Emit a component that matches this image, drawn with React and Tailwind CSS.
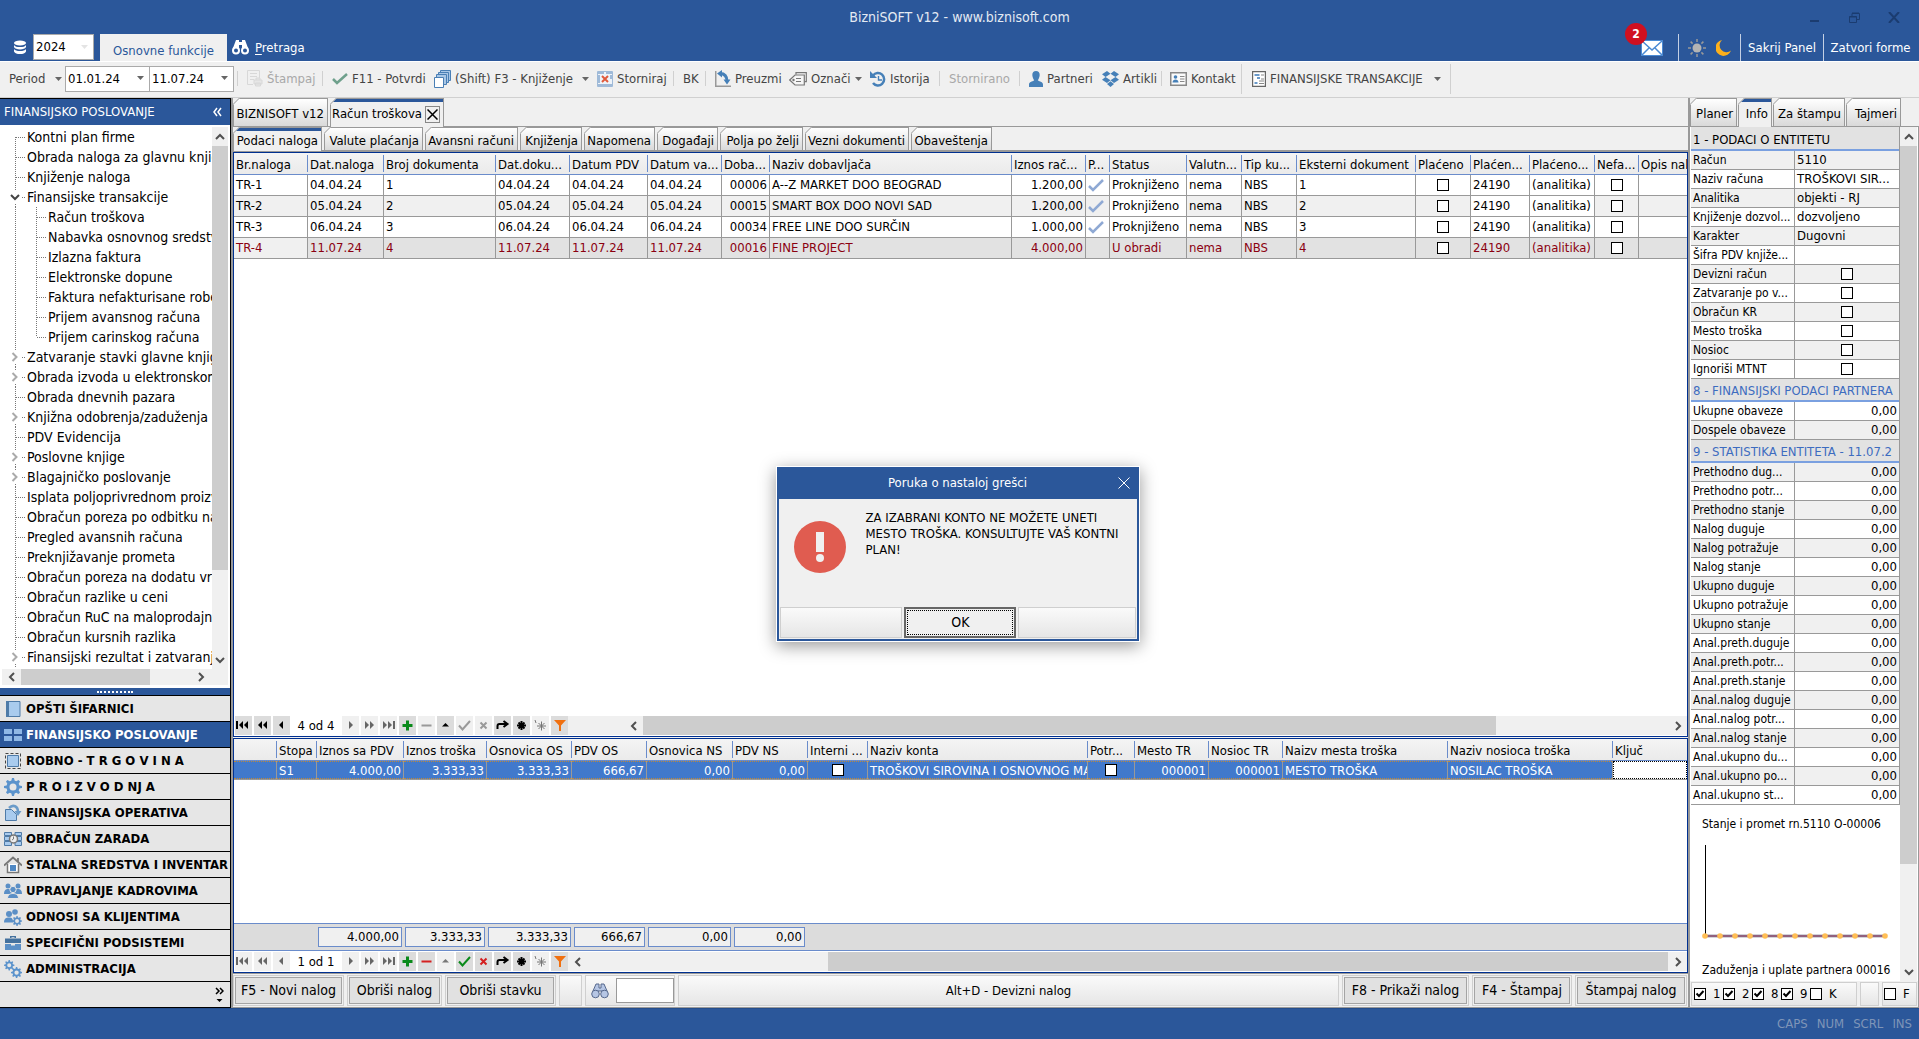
import React from "react";

/* ---------- shared bits ---------- */

function Caret({ className = "fill-[#666]" }) {
  return (
    <svg width="7" height="4" viewBox="0 0 7 4" className={className} aria-hidden="true">
      <path d="M0 0h7L3.5 4z" />
    </svg>
  );
}

function Chevron({ dir }) {
  const d = {
    up: "M1 7l4-4 4 4",
    down: "M1 3l4 4 4-4",
    left: "M7 1L3 5l4 4",
    right: "M3 1l4 4-4 4",
  }[dir];
  return (
    <svg width="10" height="10" viewBox="0 0 10 10" fill="none" stroke="#505050" strokeWidth="2" aria-hidden="true">
      <path d={d} />
    </svg>
  );
}

function Check({ label, checked = false }) {
  return (
    <span className="inline-grid">
      <input
        type="checkbox"
        defaultChecked={checked}
        aria-label={label}
        className="peer col-start-1 row-start-1 size-3 appearance-none border border-black bg-white"
      />
      <svg
        viewBox="0 0 12 12"
        className="pointer-events-none col-start-1 row-start-1 hidden size-3 peer-checked:block"
        fill="none"
        stroke="#000"
        strokeWidth="2"
        aria-hidden="true"
      >
        <path d="M2.5 5.5L5 8l4.5-5" />
      </svg>
    </span>
  );
}

function Tab({ children, active = false, width, extra }) {
  return (
    <div
      className={
        "relative flex shrink-0 items-center justify-end border border-b-0 border-[#999] pr-[3px] whitespace-nowrap " +
        (active ? "-mb-px bg-[#f0f0f0] pb-px " : "bg-linear-to-b from-white to-[#d9d9d9] ") +
        width
      }
    >
      {active && <span className="absolute inset-x-0 top-0 h-[3px] bg-[#2b579a]" />}
      <svg className="absolute -top-px -left-px" width="7" height="7" viewBox="0 0 7 7" aria-hidden="true">
        <path d="M0 0h7L0 7z" fill="#f0f0f0" />
        <path d="M6.5 0L0 6.5" stroke="#999" />
      </svg>
      <button type="button" className="pt-[3px]">{children}</button>
      {extra}
    </div>
  );
}

/* ---------- title bar ---------- */

function TitleBar() {
  return (
    <header className="grid h-[61px] shrink-0 grid-rows-[34px_27px] bg-[#2b579a] text-white">
      <div className="grid grid-cols-[1fr_auto_1fr] items-center">
        <span />
        <h1 className="text-[14px] text-[#e4eaf3]">BizniSOFT v12 - www.biznisoft.com</h1>
        <div className="flex items-center justify-end gap-[28px] pr-[19px]">
          <button type="button" aria-label="Umanji" className="w-3 pt-1">
            <svg width="11" height="10" viewBox="0 0 11 10"><path d="M1 7h9" stroke="#1b3c70" strokeWidth="2" /></svg>
          </button>
          <button type="button" aria-label="Vrati">
            <svg width="11" height="11" viewBox="0 0 11 11" fill="none" stroke="#1b3c70"><path d="M.5 4.500h7v6h-7zM3 4V1.500h7.500v6H8M.5 5h7M3 1h7" /></svg>
          </button>
          <button type="button" aria-label="Zatvori">
            <svg width="12" height="11" viewBox="0 0 12 11" stroke="#1b3c70" strokeWidth="2"><path d="M1 0l10 11M11 0L1 11" /></svg>
          </button>
        </div>
      </div>
      <div className="flex items-stretch">
        <svg className="mt-[6px] ml-[13px] shrink-0" width="14" height="15" viewBox="0 0 14 15" fill="#fff" aria-hidden="true">
          <ellipse cx="7" cy="3" rx="6" ry="2.500" />
          <path d="M1 5c1 1.800 3 2 6 2s5-.2 6-2v2c-1 1.800-3 2.400-6 2.400S2 8.800 1 7zM1 9c1 1.500 3 2 6 2s5-.5 6-2v2.500c-1 2-3 2.500-6 2.500s-5-.5-6-2.500z" />
        </svg>
        <div className="relative ml-[6px] w-[61px]">
          <select
            aria-label="Godina"
            className="h-[26px] w-full appearance-none border border-[#aaa] bg-white pl-[2px] text-[13px] text-black"
            defaultValue="2024"
          >
            <option>2024</option>
          </select>
          <span className="pointer-events-none absolute top-[11px] right-[6px]"><Caret className="fill-[#e4e4e4]" /></span>
        </div>
        <button type="button" className="ml-[6px] w-[127px] bg-[#f0f0f0] pt-[6px] text-[13px] text-[#2b579a]">
          Osnovne funkcije
        </button>
        <button type="button" className="ml-[5px] flex items-center gap-[6px] text-[13px]">
          <svg width="17" height="15" viewBox="0 0 17 15" fill="#fff" aria-hidden="true">
            <path d="M4 0h3v2h3V0h3l3 8H10V5H7v3H1z" />
            <circle cx="4" cy="10.500" r="3" fill="#2b579a" stroke="#fff" strokeWidth="2" />
            <circle cx="13" cy="10.500" r="3" fill="#2b579a" stroke="#fff" strokeWidth="2" />
          </svg>
          <span><u className="underline-offset-2">P</u>retraga</span>
        </button>
        <div className="ml-auto flex items-stretch text-[13px]">
          <button type="button" aria-label="Poruke" className="relative mr-[15px]">
            <svg width="22" height="16" viewBox="0 0 22 16" aria-hidden="true">
              <path d="M.5.500h21v15H.5z" fill="#fff" stroke="#4a8ad4" />
              <path d="M1 1l10 9 10-9M1 15l7-7M21 15l-7-7" fill="none" stroke="#4a8ad4" strokeWidth="1.500" />
            </svg>
            <span className="absolute -top-[11px] -left-[16px] flex size-[22px] items-center justify-center rounded-full bg-[#d01020] text-[12px] font-bold">2</span>
          </button>
          <div className="flex items-center gap-[10px] border-x border-[#c4d0e4] px-[9px]">
            <svg width="18" height="18" viewBox="0 0 18 18" aria-label="Svetla tema">
              <circle cx="9" cy="9" r="4.500" fill="#b4b4b4" />
              <path d="M9 0v3M9 15v3M0 9h3M15 9h3M2.600 2.600l2 2M13.400 13.400l2 2M15.400 2.600l-2 2M4.600 13.400l-2 2" stroke="#999" strokeWidth="1.500" />
            </svg>
            <svg width="15" height="16" viewBox="0 0 15 16" aria-label="Tamna tema">
              <path d="M6 0A8 8 0 1 0 15 10.500 6.500 6.500 0 0 1 6 0z" fill="#fdb01c" />
            </svg>
          </div>
          <button type="button" className="w-[83px] border-r border-[#c4d0e4]">Sakrij Panel</button>
          <button type="button" className="w-[95px] pr-[2px]">Zatvori forme</button>
        </div>
      </div>
    </header>
  );
}

/* ---------- toolbar ---------- */

function Sep({ tall = false }) {
  return <span className={"shrink-0 border-l border-[#d0d0d0] " + (tall ? "h-[30px]" : "h-[15px]")} />;
}

function DateBox({ label, value }) {
  return (
    <div className="relative -ml-px w-[85px] shrink-0">
      <input
        aria-label={label}
        defaultValue={value}
        className="h-[26px] w-full border border-[#aaa] bg-white pl-[2px] text-[13px] text-black"
      />
      <span className="pointer-events-none absolute top-[10px] right-[6px]"><Caret /></span>
    </div>
  );
}

function Tool({ icon, children, width, muted = false }) {
  return (
    <button
      type="button"
      className={"flex h-[24px] shrink-0 items-center gap-1 whitespace-nowrap " + (muted ? "text-[#a8a8a8] " : "text-[#444] ") + width}
    >
      {icon}
      <span>{children}</span>
    </button>
  );
}

const toolIcons = {
  print: (
    <svg width="17" height="17" viewBox="0 0 17 17" fill="none" stroke="#d8d8d8" aria-hidden="true">
      <path d="M13.500 8V.5H1.500v14H7M4 3.500h7M4 6.500h7M4 9.500h4" /><path d="M8 10h8v4H8zM10 10V8h4v2M9.500 13h5v3h-5z" fill="#e6e6e6" />
    </svg>
  ),
  ok: (
    <svg width="16" height="12" viewBox="0 0 16 12" fill="none" stroke="#6fa08c" strokeWidth="2.500" aria-hidden="true"><path d="M1 6l4 4L15 1" /></svg>
  ),
  stack: (
    <svg width="17" height="18" viewBox="0 0 17 18" fill="#a9c7e6" stroke="#4a7fb5" aria-hidden="true">
      <path d="M6.500.500h10v10h-10z" /><path d="M4.500 2.500h10v10h-10z" /><path d="M2.500 4.500h10v10h-10z" /><path d="M.5 7.500h9v10h-9z" fill="#fff" />
    </svg>
  ),
  storno: (
    <svg width="16" height="16" viewBox="0 0 16 16" aria-hidden="true">
      <path d="M.5.500h15v15H.5z" fill="#eef3f9" stroke="#9fbad8" />
      <path d="M1 1h6v2H1zM9 1h6v2H9zM1 4h2v8H1zM13 4h2v4h-2zM1 13h14v2H1z" fill="#9fbad8" />
      <path d="M5 5l6 6M11 5l-6 6" stroke="#e05a3c" strokeWidth="2" />
    </svg>
  ),
  take: (
    <svg width="16" height="17" viewBox="0 0 16 17" aria-hidden="true">
      <path d="M.75 1v15.250H16" fill="none" stroke="#999" strokeWidth="1.500" />
      <path d="M5 3.500c5 0 7 2.500 7 8" fill="none" stroke="#4680b8" strokeWidth="3" />
      <path d="M7 0v7.500L2 3.500zM8.500 9.500h7L12 14.500z" fill="#4680b8" />
    </svg>
  ),
  tag: (
    <svg width="18" height="14" viewBox="0 0 18 14" fill="#f6f6f6" stroke="#777" strokeWidth="1.200" aria-hidden="true">
      <path d="M7 2.500V.7h10.300v9H15.500" /><path d="M.7 8L6 3h9.300v10H6z" /><path d="M7 6.500h5M7 9.500h5" /><circle cx="4.500" cy="8" r=".6" />
    </svg>
  ),
  history: (
    <svg width="16" height="16" viewBox="0 0 16 16" fill="none" stroke="#4680b8" aria-hidden="true">
      <path d="M3 4.500A6.200 6.200 0 1 1 3 12" strokeWidth="2.500" /><path d="M0 0v7h7z" fill="#4680b8" stroke="none" /><path d="M8.500 5v4h3.500" strokeWidth="1.400" />
    </svg>
  ),
  person: (
    <svg width="14" height="16" viewBox="0 0 14 16" fill="#4680b8" aria-hidden="true">
      <path d="M7 0c2.400 0 3.700 1.600 3.700 4S9 8.800 8.800 9.600c2 1 5.200 1.400 5.200 3.900V16H0v-2.500C0 11 3.200 10.600 5.200 9.600 5 8.800 3.300 6.400 3.300 4S4.600 0 7 0z" />
    </svg>
  ),
  box: (
    <svg width="17" height="16" viewBox="0 0 17 16" fill="#4680b8" aria-hidden="true">
      <path d="M5 0l3.500 2.800L3.500 6 0 3.200zM12 0l5 3.200L13.500 6l-5-3.200zM0 8.800L3.500 6l5 3.200L5 12zM17 8.800L13.500 6l-5 3.200L12 12zM5 13l3.500-2.800L12 13l-3.500 3z" />
    </svg>
  ),
  card: (
    <svg width="17" height="14" viewBox="0 0 17 14" aria-hidden="true">
      <path d="M.75.750h15.500v12.500H.75z" fill="#fafafa" stroke="#888" strokeWidth="1.500" />
      <circle cx="5.500" cy="5" r="1.800" fill="#4680b8" /><path d="M2.500 10.500c0-4 6-4 6 0z" fill="#4680b8" />
      <path d="M10 4.500h4.500M10 7h4.500M10 9.500h4.500" stroke="#888" />
    </svg>
  ),
  doc: (
    <svg width="14" height="16" viewBox="0 0 14 16" aria-hidden="true">
      <path d="M.6.600h12.800v14.800H.6z" fill="#fff" stroke="#666" strokeWidth="1.200" />
      <path d="M2.500 4h5M5 7h3M2.500 12h3" stroke="#3a78b8" strokeWidth="1.300" /><path d="M9 4h3M9 8h3M7 10h5M7 12.500h5" stroke="#888" />
    </svg>
  ),
};

function Toolbar() {
  return (
    <div className="flex h-[37px] shrink-0 items-center overflow-hidden border-t border-b border-t-white border-b-[#d0d0d0] pb-[2px] pl-[9px] text-[13px]">
      <Tool width="w-[46px]">Period</Tool>
      <Caret />
      <span className="w-[4px]" />
      <DateBox label="Od datuma" value="01.01.24" />
      <DateBox label="Do datuma" value="11.07.24" />
      <span className="w-[3px]" />
      <Sep />
      <span className="w-[8px]" />
      <Tool icon={toolIcons.print} width="w-[76px]" muted>Štampaj</Tool>
      <Sep />
      <span className="w-[9px]" />
      <Tool icon={toolIcons.ok} width="w-[102px]">F11 - Potvrdi</Tool>
      <Tool icon={toolIcons.stack} width="w-[148px]">(Shift) F3 - Knjiženje</Tool>
      <Caret />
      <span className="w-[8px]" />
      <Tool icon={toolIcons.storno} width="w-[76px]">Storniraj</Tool>
      <Sep />
      <span className="w-[9px]" />
      <Tool width="w-[22px]">BK</Tool>
      <Sep />
      <span className="w-[9px]" />
      <Tool icon={toolIcons.take} width="w-[74px]">Preuzmi</Tool>
      <Tool icon={toolIcons.tag} width="w-[66px]">Označi</Tool>
      <Caret />
      <span className="w-[8px]" />
      <Tool icon={toolIcons.history} width="w-[69px]">Istorija</Tool>
      <Sep />
      <span className="w-[9px]" />
      <Tool width="w-[70px]" muted>Stornirano</Tool>
      <Sep />
      <span className="w-[9px]" />
      <Tool icon={toolIcons.person} width="w-[73px]">Partneri</Tool>
      <Tool icon={toolIcons.box} width="w-[59px]">Artikli</Tool>
      <Sep />
      <span className="w-[8px]" />
      <Tool icon={toolIcons.card} width="w-[71px]">Kontakt</Tool>
      <Sep tall />
      <span className="w-[10px]" />
      <Tool icon={toolIcons.doc} width="w-[182px]">FINANSIJSKE TRANSAKCIJE</Tool>
      <Caret />
      <span className="w-[9px]" />
      <Sep tall />
    </div>
  );
}

/* ---------- left panel ---------- */

const tree = [
  ["Kontni plan firme", 1],
  ["Obrada naloga za glavnu knjigu", 1],
  ["Knjiženje naloga", 1],
  ["Finansijske transakcije", 1, "open"],
  ["Račun troškova", 2],
  ["Nabavka osnovnog sredstva", 2],
  ["Izlazna faktura", 2],
  ["Elektronske dopune", 2],
  ["Faktura nefakturisane robe", 2],
  ["Prijem avansnog računa", 2],
  ["Prijem carinskog računa", 2, "last"],
  ["Zatvaranje stavki glavne knjige", 1, "closed"],
  ["Obrada izvoda u elektronskom", 1, "closed"],
  ["Obrada dnevnih pazara", 1],
  ["Knjižna odobrenja/zaduženja", 1, "closed"],
  ["PDV Evidencija", 1],
  ["Poslovne knjige", 1, "closed"],
  ["Blagajničko poslovanje", 1, "closed"],
  ["Isplata poljoprivrednom proizvođaču", 1],
  ["Obračun poreza po odbitku na", 1],
  ["Pregled avansnih računa", 1],
  ["Preknjižavanje prometa", 1],
  ["Obračun poreza na dodatu vrednost", 1],
  ["Obračun razlike u ceni", 1],
  ["Obračun RuC na maloprodajne", 1],
  ["Obračun kursnih razlika", 1],
  ["Finansijski rezultat i zatvaranje", 1, "closed"],
];

function TreeLines({ level, kind, first }) {
  const expander = kind === "open" || kind === "closed";
  return (
    <svg width={level === 2 ? 48 : 27} height="20" className="shrink-0" fill="none" aria-hidden="true">
      <g stroke="#777" strokeDasharray="1 1">
        {expander ? (
          <path d="M15.500 0v3M15.500 17v3M22 10.500h4" />
        ) : level === 1 ? (
          <path d={first ? "M15.500 10v10M16 10.500h10" : "M15.500 0v20M16 10.500h10"} />
        ) : (
          <path d={kind === "last" ? "M15.500 0v20M36.500 0v10M37 10.500h10" : "M15.500 0v20M36.500 0v20M37 10.500h10"} />
        )}
      </g>
      {kind === "open" && <path d="M11 8l4 4 4-4" stroke="#444" strokeWidth="2" />}
      {kind === "closed" && <path d="M12.500 6l4 4-4 4" stroke="#aaa" strokeWidth="2" />}
    </svg>
  );
}

const blue = { fill: "#a9cbee", stroke: "#4f7ba8" };
const gear = "M8 0h2l.6 2.600 1.600.7L14.500 2 16 3.500l-1.300 2.300.7 1.600L18 8v2l-2.600.6-.7 1.600L16 14.500 14.500 16l-2.300-1.300-1.600.7L10 18H8l-.6-2.600-1.600-.7L3.500 16 2 14.500l1.300-2.300-.7-1.600L0 10V8l2.600-.6.7-1.600L2 3.500 3.500 2l2.300 1.300 1.600-.7zM9 5.500a3.500 3.500 0 1 0 0 7 3.500 3.500 0 0 0 0-7z";

const modules = [
  ["OPŠTI ŠIFARNICI", <g key="i"><path d="M3 1.500h13v15H3z" {...blue} /><path d="M2 1h3v16H2z" fill="#4f7ba8" /></g>],
  ["FINANSIJSKO POSLOVANJE", <g key="i" fill="#8fb8e6"><path d="M0 3h8v5H0zM10 3h8v5h-8zM0 10h8v5H0zM10 10h8v5h-8z" /></g>],
  ["ROBNO - T R G O V I N A", <g key="i"><path d="M3.500 3.500h11v11h-11z" {...blue} /><path d="M1.500 1.500h15v15h-15z" fill="none" stroke="#444" strokeDasharray="3 2" /></g>],
  ["P R O I Z V O D NJ A", <path key="i" d={gear} fill="#5b93cc" fillRule="evenodd" />],
  ["FINANSIJSKA OPERATIVA", <g key="i"><path d="M1.500 5.500h6l5 5v6h-11z" {...blue} /><path d="M5 4c4-4 9-2 9 4" fill="none" stroke="#6b9bc9" strokeWidth="2.500" /><path d="M10.500 7h7L14 12z" fill="#6b9bc9" /></g>],
  ["OBRAČUN ZARADA", <g key="i"><path d="M.5 2.500h7v3h-7zM.5 6.500h6v4h-6zM.5 11.500h7v4h-7zM11 2.500h6.500v3H11zM12 6.500h5.500v4H12zM11 11.500h6.500v4H11z" {...blue} /><circle cx="9.500" cy="9" r="4" fill="#eee" stroke="#777" strokeWidth="1.500" /><path d="M9.500 6.500V9l-1.500 1" stroke="#777" fill="none" /></g>],
  ["STALNA SREDSTVA I INVENTAR", <g key="i"><path d="M3.500 8v8.500h11V8" fill="#fff" stroke="#777" strokeWidth="1.500" /><path d="M0 9.500L9 1.500l9 8M14 2v4" fill="none" stroke="#777" strokeWidth="1.800" /><path d="M6 9h6v6H6z" fill="#4f88c4" /></g>],
  ["UPRAVLJANJE KADROVIMA", <g key="i" fill="#5b8fc6"><circle cx="4" cy="4" r="2.500" /><circle cx="14" cy="4" r="2.500" /><path d="M0 12c0-4 2-5 4-5h10c2 0 4 1 4 5z" /><circle cx="9" cy="7.500" r="3.200" stroke="#e6e6e6" /><path d="M3.500 16.500c0-4 3-5 5.500-5s5.500 1 5.500 5z" stroke="#e6e6e6" /></g>],
  ["ODNOSI SA KLIJENTIMA", <g key="i" fill="#5b8fc6"><circle cx="11" cy="4" r="2.800" /><circle cx="5" cy="6" r="3" /><path d="M0 14.500c0-4 2-5 5-5s4 1 4 5z" /><path d={gear} fillRule="evenodd" transform="translate(8 8) scale(.56)" /></g>],
  ["SPECIFIČNI PODSISTEMI", <g key="i" fill="#44719e"><path d="M6 4V2h6v2h-1.500v-.8h-3V4zM1 4.500h16v4.500H1z" /><path d="M1 10h6v1.500h4V10h6v6H1z" fill="#5b8fc6" /></g>],
  ["ADMINISTRACIJA", <g key="i" fill="#5b93cc"><path d={gear} fillRule="evenodd" transform="scale(.58)" /><path d={gear} fillRule="evenodd" transform="translate(7 7) scale(.62)" /></g>],
];

function Sidebar() {
  return (
    <aside className="flex w-[231px] shrink-0 flex-col border-t border-r border-black bg-white">
      <div className="flex h-[26px] shrink-0 items-center justify-between bg-[#2b579a] pr-2 pl-[4px] text-[13px] text-white">
        <h2>FINANSIJSKO POSLOVANJE</h2>
        <button type="button" aria-label="Skupi panel">
          <svg width="9" height="10" viewBox="0 0 9 10" fill="none" stroke="#fff" strokeWidth="1.500"><path d="M4 1L1 5l3 4M8 1L5 5l3 4" /></svg>
        </button>
      </div>
      <div className="flex min-h-0 flex-1 overflow-hidden pt-[2px] pr-[2px]">
        <ul className="min-w-0 flex-1 overflow-hidden text-[14px] leading-5">
          {tree.map(([name, level, kind], i) => (
            <li key={name} className="flex h-5 whitespace-nowrap">
              <TreeLines level={level} kind={kind} first={i === 0} />
              <a href="#" className="text-black">{name}</a>
            </li>
          ))}
        </ul>
        <div className="flex w-4 shrink-0 flex-col items-center bg-[#f0f0f0]">
          <span className="flex h-[19px] items-center"><Chevron dir="up" /></span>
          <span className="h-[424px] w-full bg-[#cdcdcd]" />
          <span className="mt-auto flex h-[19px] items-center"><Chevron dir="down" /></span>
        </div>
      </div>
      <div className="mr-[2px] mb-[3px] ml-[2px] flex h-4 shrink-0 items-center bg-[#f0f0f0] pr-[22px]">
        <span className="flex w-[19px] justify-center"><Chevron dir="left" /></span>
        <span className="h-full w-[129px] bg-[#cdcdcd]" />
        <span className="ml-auto"><Chevron dir="right" /></span>
      </div>
      <div className="flex h-[7px] shrink-0 items-center justify-center bg-[#2b579a]">
        <span className="w-[36px] border-t-2 border-dotted border-white" />
      </div>
      <nav className="shrink-0 border-b border-black bg-[#e6e6e6]">
        {modules.map(([name, icon], i) => (
          <button
            type="button"
            key={name}
            className={
              "flex h-[26px] w-full items-center gap-[4px] border-t border-black pl-[4px] text-left text-[13px] font-bold whitespace-nowrap " +
              (i === 1 ? "bg-[#2b579a] text-white" : "text-black")
            }
          >
            <svg width="18" height="18" viewBox="0 0 18 18" className="shrink-0" aria-hidden="true">{icon}</svg>
            {name}
          </button>
        ))}
        <div className="flex h-[26px] items-center justify-end border-t border-black pr-[6px]">
          <button type="button" aria-label="Još modula">
            <svg width="9" height="16" viewBox="0 0 9 16" fill="none" stroke="#000" strokeWidth="1.500">
              <path d="M1 1l3 3-3 3M5 1l3 3-3 3" /><path d="M1.500 12h6L4.500 15z" fill="#000" stroke="none" />
            </svg>
          </button>
        </div>
      </nav>
    </aside>
  );
}

/* ---------- record navigator ---------- */

const navGlyphs = [
  ["Prvi", "M1 5h2v8H1zM8 5v8L4 9zM13 5v8L9 9z"],
  ["Prethodna strana", "M8 5v8L4 9zM13 5v8L9 9z"],
  ["Prethodni", "M10 5v8L6 9z"],
  ["Sledeći", "M7 5v8l4-4z"],
  ["Sledeća strana", "M4 5v8l4-4zM9 5v8l4-4z"],
  ["Poslednji", "M3 5v8l4-4zM8 5v8l4-4zM13 5h2v8h-2z"],
];
const navTools = [
  ["Dodaj", "M3.500 9.500h10M8.500 4.500v10", 3],
  ["Obriši", "M3.500 9.500h10", 2],
  ["Izmeni", "M5 10.500h7L8.500 7z", 0],
  ["Potvrdi", "M3 9.500l3.500 4L14 5", 2],
  ["Otkaži", "M5.500 6.500l6 6M11.500 6.500l-6 6", 2],
  ["Osveži", "M3.500 13v-3c0-1.500.5-2 2-2H12M9.500 5l4 3-4 3", 2],
  ["Obeleži", "M8.500 5v9M4 9.500h9M5.500 6.500l6 6M11.500 6.500l-6 6", 2],
  ["Idi na oznaku", "M9.500 5.500v9M5 10h9M6.500 7l6 6M12.500 7l-6 6M3 4l1 3", 1],
  ["Filter", "M3 4h12l-5 5.500V15H8V9.500z", 0],
];

function Navigator({ text, ends, tools, thumb, spacer = false }) {
  return (
    <div className="flex h-[20px] shrink-0 items-start gap-[2px] bg-white pl-[1px]">
      {navGlyphs.map(([name, d], i) => (
        <React.Fragment key={name}>
          {i === 3 && <span className="w-[48px] text-center leading-[19px]">{text}</span>}
          <button type="button" aria-label={name} className={"h-[19px] w-[17px] shrink-0 " + (i < 3 && ends ? "bg-[#dcdcdc]" : "bg-[#f0f0f0]")}>
            <svg width="17" height="19" viewBox="0 0 17 19" className={i < 3 && ends ? "fill-black" : "fill-[#666]"}><path d={d} /></svg>
          </button>
        </React.Fragment>
      ))}
      {navTools.map(([name, d, w], i) => {
        const color = tools[i];
        const off = color === "#999" || color === "#777";
        return (
          <button type="button" aria-label={name} key={name} className={"h-[19px] w-[17px] shrink-0 " + (off ? "bg-[#f0f0f0]" : "bg-[#dcdcdc]")}>
            <svg width="17" height="19" viewBox="0 0 17 19" fill={w ? "none" : color} stroke={w ? color : "none"} strokeWidth={w}><path d={d} /></svg>
          </button>
        );
      })}
      <div className="-ml-[2px] flex h-[19px] flex-1 items-center bg-[#f0f0f0]">
        <span className={"flex shrink-0 items-center " + (spacer ? "w-[75px] justify-end pr-[4px]" : "w-[19px] justify-center")}>
          <Chevron dir="left" />
        </span>
        <span className={"h-full bg-[#cdcdcd] " + thumb} />
        <span className="flex w-[19px] justify-center"><Chevron dir="right" /></span>
      </div>
    </div>
  );
}

/* ---------- upper table ---------- */

const cols1 = [
  ["Br.naloga", "w-[74px]"], ["Dat.naloga", "w-[76px]"], ["Broj dokumenta", "w-[112px]"], ["Dat.doku...", "w-[74px]"],
  ["Datum PDV", "w-[78px]"], ["Datum va...", "w-[74px]"], ["Doba...", "w-[48px]"], ["Naziv dobavljača", "w-[242px]"],
  ["Iznos rač...", "w-[74px]"], ["P...", "w-[24px]"], ["Status", "w-[77px]"], ["Valutn...", "w-[55px]"], ["Tip ku...", "w-[55px]"],
  ["Eksterni dokument", "w-[119px]"], ["Plaćeno", "w-[55px]"], ["Plaćen...", "w-[59px]"], ["Plaćeno...", "w-[65px]"],
  ["Nefa...", "w-[44px]"], ["Opis nal", ""],
];

const orders = [
  ["TR-1", "04.04.24", "1", "00006", "A--Z MARKET DOO BEOGRAD", "1.200,00", "Proknjiženo"],
  ["TR-2", "05.04.24", "2", "00015", "SMART BOX DOO NOVI SAD", "1.200,00", "Proknjiženo"],
  ["TR-3", "06.04.24", "3", "00034", "FREE LINE DOO SURČIN", "1.000,00", "Proknjiženo"],
  ["TR-4", "11.07.24", "4", "00016", "FINE PROJECT", "4.000,00", "U obradi"],
];

function HeadCell({ children, last }) {
  return (
    <th scope="col" className="border-b border-[#6a8ccb] p-0 text-left font-normal">
      <div className={"my-[2px] h-[17px] overflow-hidden pl-[2px] leading-[19px] text-clip whitespace-nowrap " + (last ? "" : "border-r border-[#6a8ccb]")}>
        {children}
      </div>
    </th>
  );
}

function OrdersTable() {
  return (
    <table className="w-full table-fixed border-separate border-spacing-0">
      <colgroup>{cols1.map(([n, w]) => <col key={n} className={w} />)}</colgroup>
      <thead>
        <tr className="h-[22px] bg-linear-to-b from-[#f4f4f4] to-[#eaeaea]">
          {cols1.map(([n], i) => <HeadCell key={n} last={i === cols1.length - 1}>{n}</HeadCell>)}
        </tr>
      </thead>
      <tbody>
        {orders.map(([id, date, no, code, name, amount, status], r) => {
          const cur = r === 3;
          const cells = [
            id, date, no, date, date, date, code, name, amount,
            cur ? "" : <svg width="16" height="13" viewBox="0 0 16 13" fill="none" stroke="#8fa9d4" strokeWidth="2.500"><path d="M1 7l4 4L15 1" /></svg>,
            status, "nema", "NBS", no, <Check label={"Plaćeno " + id} />, "24190", "(analitika)", <Check label={"Nefakturisano " + id} />, "",
          ];
          return (
            <tr key={id} className={"h-[21px] " + (cur ? "bg-[#e2e2e2] text-[#8b0010]" : r === 1 ? "bg-[#f0f0f0]" : "bg-white")}>
              {cells.map((c, i) => (
                <td
                  key={i}
                  className={
                    "h-[21px] overflow-hidden border-r border-b border-[#999] px-[2px] py-0 leading-[20px] whitespace-nowrap last:border-r-0 " +
                    (i === 6 || i === 8 ? "text-right " : i === 14 || i === 17 ? "text-center " : "") +
                    (cur && i === 0 ? "bg-[#f0f0f0] " : r === 1 && (i === 10 || i === 15 || i === 16) ? "bg-white " : "")
                  }
                >
                  {i === 14 || i === 17 ? <span className="flex justify-center">{c}</span> : c}
                </td>
              ))}
            </tr>
          );
        })}
      </tbody>
    </table>
  );
}

/* ---------- lower table ---------- */

const cols2 = [
  ["", "w-[43px]"], ["Stopa", "w-[40px]"], ["Iznos sa PDV", "w-[87px]"], ["Iznos troška", "w-[83px]"], ["Osnovica OS", "w-[85px]"],
  ["PDV OS", "w-[75px]"], ["Osnovica NS", "w-[86px]"], ["PDV NS", "w-[75px]"], ["Interni ...", "w-[60px]"], ["Naziv konta", "w-[220px]"],
  ["Potr...", "w-[47px]"], ["Mesto TR", "w-[74px]"], ["Nosioc TR", "w-[74px]"], ["Naizv mesta troška", "w-[165px]"],
  ["Naziv nosioca troška", "w-[165px]"], ["Ključ", ""],
];
const item = ["", "S1", "4.000,00", "3.333,33", "3.333,33", "666,67", "0,00", "0,00", "#", "TROŠKOVI SIROVINA I OSNOVNOG MATERIJALA", "#", "000001", "000001", "MESTO TROŠKA", "NOSILAC TROŠKA", ""];
const rightCols = [2, 3, 4, 5, 6, 7, 11, 12];

function ItemsTable() {
  return (
    <table className="w-full table-fixed border-separate border-spacing-0">
      <colgroup>{cols2.map(([n, w]) => <col key={n} className={w} />)}</colgroup>
      <thead>
        <tr className="h-[22px] bg-linear-to-b from-[#f4f4f4] to-[#eaeaea]">
          {cols2.map(([n], i) => <HeadCell key={n} last={i === cols2.length - 1}>{n}</HeadCell>)}
        </tr>
      </thead>
      <tbody>
        <tr className="h-[19px] bg-[#4179cc] text-white">
          {item.map((c, i) => (
            <td
              key={i}
              className={
                "h-[19px] overflow-hidden border-r border-b border-[#999] p-0 whitespace-nowrap last:border-r-0 " +
                (i === 15 ? "bg-white" : "")
              }
            >
              <div
                className={
                  "h-[18px] overflow-hidden px-[2px] leading-[17px] " +
                  (i === 15 ? "border border-dotted border-black " : "border-y border-dotted border-[#c08a3a] ") +
                  (rightCols.includes(i) ? "text-right " : "")
                }
              >
                {c === "#" ? <span className="flex h-full items-center justify-center"><Check label={cols2[i][0]} /></span> : c}
              </div>
            </td>
          ))}
        </tr>
      </tbody>
    </table>
  );
}

const totals = [
  ["4.000,00", "w-[84px]"], ["3.333,33", "w-[80px]"], ["3.333,33", "w-[83px]"], ["666,67", "w-[71px]"], ["0,00", "w-[83px]"], ["0,00", "w-[71px]"],
];

function PanelButton({ children, width }) {
  return (
    <div className={"shrink-0 border border-[#cfcfcf] p-px " + width}>
      <button type="button" className="h-full w-full border border-[#a4a4a4] bg-[#e1e1e1] text-[14px] whitespace-nowrap">{children}</button>
    </div>
  );
}

const subTabs = [
  ["Podaci naloga", "w-[89px]"], ["Valute plaćanja", "w-[99px]"], ["Avansni računi", "w-[93px]"], ["Knjiženja", "w-[62px]"],
  ["Napomena", "w-[71px]"], ["Događaji", "w-[61px]"], ["Polja po želji", "w-[83px]"], ["Vezni dokumenti", "w-[104px]"], ["Obaveštenja", "w-[81px]"],
];

function Workspace() {
  return (
    <main className="flex min-w-0 flex-1 flex-col border-l-2 border-[#999]">
      <div className="flex h-[29px] shrink-0 gap-[2px] border-b border-[#999]">
        <Tab width="w-[95px]">BIZNISOFT v12</Tab>
        <Tab
          width="w-[114px] gap-[3px]"
          active
          extra={
            <button type="button" aria-label="Zatvori karticu" className="mt-[3px] flex h-[17px] w-[15px] shrink-0 items-center justify-center border border-[#888]">
              <svg width="11" height="11" viewBox="0 0 11 11" stroke="#000" strokeWidth="1.500"><path d="M.5.500l10 10M10.500.500l-10 10" /></svg>
            </button>
          }
        >
          Račun troškova
        </Tab>
      </div>
      <div className="flex h-[25px] shrink-0 gap-[2px] border-b-2 border-[#999]">
        {subTabs.map(([n, w], i) => <Tab key={n} width={w} active={i === 0}>{n}</Tab>)}
      </div>
      <section className="flex min-h-0 flex-[586] flex-col overflow-hidden border border-[#003090] bg-white" aria-label="Nalozi">
        <OrdersTable />
        <div className="flex-1" />
        <Navigator
          text="4 od 4"
          ends
          spacer
          thumb="flex-[852] mr-[172px]"
          tools={["#0a8a1a", "#999", "#000", "#999", "#999", "#000", "#000", "#777", "#f07010"]}
        />
      </section>
      <section className="mt-px flex min-h-0 flex-[234] flex-col overflow-hidden border border-[#003090] bg-white" aria-label="Stavke">
        <ItemsTable />
        <div className="flex-1" />
        <div className="flex h-[28px] shrink-0 items-center gap-[2px] border-y border-[#6a8ccb] bg-[#dcdcdc] pl-[84px]">
          {totals.map(([t, w], i) => (
            <span key={i} className={"mr-px h-[20px] border border-[#6a8ccb] bg-[#f0f0f0] pr-[2px] text-right leading-[18px] " + w}>{t}</span>
          ))}
        </div>
        <div className="h-px shrink-0" />
        <Navigator
          text="1 od 1"
          thumb="ml-[241px] flex-1"
          tools={["#0a8a1a", "#d42020", "#777", "#0a8a1a", "#d42020", "#000", "#000", "#777", "#f07010"]}
        />
      </section>
      <footer className="flex h-[35px] shrink-0 gap-[3px] border-y border-[#999] bg-[#f0f0f0] py-px pr-px">
        <PanelButton width="w-[111px]">F5 - Novi nalog</PanelButton>
        <PanelButton width="w-[95px]">Obriši nalog</PanelButton>
        <PanelButton width="w-[111px]">Obriši stavku</PanelButton>
        <span className="w-[23px] border border-[#cfcfcf] bg-linear-to-b from-[#fafafa] to-[#e6e6e6]" />
        <label className="flex w-[90px] items-center gap-[7px] border border-[#cfcfcf] bg-linear-to-b from-[#fafafa] to-[#e6e6e6] pl-[5px]">
          <svg width="18" height="16" viewBox="0 0 18 16" fill="#b6c6e4" stroke="#56688c" aria-hidden="true">
            <path d="M5 1h3v4h2V1h3l3 7H2z" /><circle cx="4.500" cy="11" r="3.800" /><circle cx="13.500" cy="11" r="3.800" />
          </svg>
          <input aria-label="Pretraga stavki" className="h-[25px] w-[58px] border border-[#999] bg-white" />
        </label>
        <button type="button" className="min-w-0 flex-1 border border-[#cfcfcf] bg-linear-to-b from-[#fafafa] to-[#e6e6e6]">Alt+D - Devizni nalog</button>
        <PanelButton width="w-[127px]">F8 - Prikaži nalog</PanelButton>
        <PanelButton width="w-[100px]">F4 - Štampaj</PanelButton>
        <PanelButton width="w-[112px]">Štampaj nalog</PanelButton>
      </footer>
    </main>
  );
}

/* ---------- right panel ---------- */

const info = [
  ["Račun", "5110"], ["Naziv računa", "TROŠKOVI SIR..."], ["Analitika", "objekti - RJ"], ["Knjiženje dozvol...", "dozvoljeno"],
  ["Karakter", "Dugovni"], ["Šifra PDV knjiže...", ""], ["Devizni račun", "#"], ["Zatvaranje po v...", "#"], ["Obračun KR", "#"],
  ["Mesto troška", "#"], ["Nosioc", "#"], ["Ignoriši MTNT", "#"],
];
const partner = [["Ukupne obaveze", "0,00"], ["Dospele obaveze", "0,00"]];
const stats = [
  "Prethodno dug...", "Prethodno potr...", "Prethodno stanje", "Nalog duguje", "Nalog potražuje", "Nalog stanje", "Ukupno duguje",
  "Ukupno potražuje", "Ukupno stanje", "Anal.preth.duguje", "Anal.preth.potr...", "Anal.preth.stanje", "Anal.nalog duguje",
  "Anal.nalog potr...", "Anal.nalog stanje", "Anal.ukupno du...", "Anal.ukupno po...", "Anal.ukupno st...",
].map((n) => [n, "0,00"]);

function InfoGroup({ title, rows, dark = false, grayFirst = false }) {
  return (
    <table className="w-full shrink-0 table-fixed border-separate border-spacing-0 border-r border-[#999]">
      <colgroup><col className="w-[104px]" /><col /></colgroup>
      <thead>
        <tr>
          <th
            colSpan={2}
            className={
              "overflow-hidden border-b-2 border-[#7aa0e0] bg-[#e2e2e2] px-[2px] pb-0 text-left leading-[18px] font-normal whitespace-nowrap " +
              (dark ? "h-[24px] pt-[3px] text-black" : "h-[23px] pt-[3px] text-[#3d6cc0]")
            }
          >
            {title}
          </th>
        </tr>
      </thead>
      <tbody>
        {rows.map(([n, v], i) => (
          <tr key={n} className={(i % 2 === 0) === grayFirst ? "bg-[#f0f0f0]" : "bg-white"}>
            <th scope="row" className="h-[19px] overflow-hidden border-r border-b border-[#999] px-[2px] py-0 text-left text-[12px] leading-[18px] font-normal whitespace-nowrap">{n}</th>
            <td className={"h-[19px] overflow-hidden border-b border-[#999] px-[2px] py-0 leading-[18px] whitespace-nowrap " + (v === "0,00" ? "text-right" : "")}>
              {v === "#" ? <span className="flex justify-center"><Check label={n} /></span> : v}
            </td>
          </tr>
        ))}
      </tbody>
    </table>
  );
}

const dots = [0, 1, 2, 3, 4, 5, 6, 7, 8, 9, 10, 11, 12];

function RightPanel() {
  return (
    <aside className="flex w-[231px] shrink-0 flex-col border-l-2 border-[#999]">
      <div className="flex h-[29px] shrink-0 gap-px border-b border-[#999]">
        <Tab width="w-[47px]">Planer</Tab>
        <Tab width="w-[34px]" active>Info</Tab>
        <Tab width="w-[72px]">Za štampu</Tab>
        <Tab width="w-[55px]">Tajmeri</Tab>
      </div>
      <div className="flex min-h-0 flex-1 border-r border-[#999] bg-white pl-px">
        <div className="flex min-w-0 flex-1 flex-col overflow-hidden">
          <InfoGroup title="1 - PODACI O ENTITETU" rows={info} dark grayFirst />
          <InfoGroup title="8 - FINANSIJSKI PODACI PARTNERA" rows={partner} />
          <InfoGroup title="9 - STATISTIKA ENTITETA - 11.07.2" rows={stats} grayFirst />
          <figure className="flex shrink-0 flex-col pt-[10px]">
            <figcaption className="pl-[11px] text-[12px] leading-[18px] whitespace-nowrap">Stanje i promet rn.5110 O-00006</figcaption>
            <svg width="200" height="128" viewBox="0 0 200 128" aria-label="Grafikon stanja i prometa">
              <path d="M14.500 12v91" stroke="#000" />
              <path d="M14 103h180" stroke="#a8a8b8" strokeWidth="3" />
              <path d="M14 103h180" stroke="#8a4a6a" strokeWidth="1.500" />
              {dots.map((n) => <circle key={n} cx={14 + n * 15} cy="103" r="2.800" fill="#ffbe55" />)}
            </svg>
          </figure>
          <p className="shrink-0 pl-[11px] text-[12px] leading-[18px] whitespace-nowrap">Zaduženja i uplate partnera 00016</p>
        </div>
        <div className="mr-px flex w-[17px] shrink-0 flex-col items-center bg-[#f0f0f0]">
          <span className="flex h-[19px] items-center"><Chevron dir="up" /></span>
          <span className="w-full flex-[719] bg-[#cdcdcd]" />
          <span className="flex-[98]" />
          <span className="flex h-[19px] items-center"><Chevron dir="down" /></span>
        </div>
      </div>
      <div className="flex h-[27px] shrink-0 gap-[3px] border-r border-b border-[#999] p-px">
        <div className="flex flex-1 items-center gap-[3px] border border-[#cfcfcf] bg-linear-to-b from-[#fafafa] to-[#e6e6e6] pl-[2px]">
          {[["1", true], ["2", true], ["8", true], ["9", true], ["K", false]].map(([n, on]) => (
            <label key={n} className="flex w-[26px] items-center gap-[7px]"><Check label={n} checked={on} />{n}</label>
          ))}
        </div>
        <span className="w-[19px] border border-[#cfcfcf] bg-linear-to-b from-[#fafafa] to-[#e6e6e6]" />
        <label className="flex w-[35px] items-center gap-[7px] border border-[#cfcfcf] bg-linear-to-b from-[#fafafa] to-[#e6e6e6] pl-px"><Check label="F" />F</label>
      </div>
    </aside>
  );
}

/* ---------- error dialog ---------- */

function ErrorDialog() {
  return (
    <div className="pointer-events-none absolute inset-0 flex items-center justify-center pt-[68px] pr-[4px]">
      <div
        role="alertdialog"
        aria-labelledby="dlg-title"
        aria-describedby="dlg-text"
        className="pointer-events-auto flex h-[176px] w-[364px] flex-col border border-white bg-[#2b579a] px-[2px] pb-[2px] shadow-[0_4px_16px_rgba(0,0,0,0.4)]"
      >
        <div className="grid h-[32px] shrink-0 grid-cols-[1fr_auto_1fr] items-center text-white">
          <span />
          <h2 id="dlg-title">Poruka o nastaloj grešci</h2>
          <button type="button" aria-label="Zatvori" className="mr-[7px] justify-self-end">
            <svg width="12" height="12" viewBox="0 0 12 12" stroke="#fff"><path d="M.5.500l11 11M11.500.500l-11 11" /></svg>
          </button>
        </div>
        <div className="flex flex-1 gap-[20px] bg-[#f0f0f0] pt-[11px] pl-[15px]">
          <svg width="52" height="52" viewBox="0 0 52 52" className="mt-[11px] shrink-0" aria-hidden="true">
            <circle cx="26" cy="26" r="26" fill="#e05c50" />
            <path d="M22 11h8v20h-8z" fill="#f0f0f0" />
            <circle cx="26" cy="37" r="4" fill="#f0f0f0" />
          </svg>
          <p id="dlg-text" className="flex-1 leading-4 text-black">
            ZA IZABRANI KONTO NE MOŽETE UNETI<br />MESTO TROŠKA. KONSULTUJTE VAŠ KONTNI<br />PLAN!
          </p>
        </div>
        <div className="flex h-[33px] shrink-0 gap-[2px] bg-[#f0f0f0] p-px">
          <span className="flex-[123] border border-[#cfcfcf] bg-linear-to-b from-[#fafafa] to-[#e6e6e6]" />
          <button type="button" className="w-[112px] border-2 border-[#666] bg-[#f0f0f0] p-px text-[14px]">
            <span className="flex h-full items-center justify-center border border-dotted border-black">OK</span>
          </button>
          <span className="flex-[117] border border-[#cfcfcf] bg-linear-to-b from-[#fafafa] to-[#e6e6e6]" />
        </div>
      </div>
    </div>
  );
}

export default function App() {
  return (
    <div className="relative flex h-screen flex-col overflow-hidden bg-[#f0f0f0] font-['DejaVu_Sans_Condensed','Noto_Sans',sans-serif] text-[13px] text-black">
      <TitleBar />
      <Toolbar />
      <div className="flex min-h-0 flex-1">
        <Sidebar />
        <Workspace />
        <RightPanel />
      </div>
      <div className="flex h-[31px] shrink-0 items-center justify-end gap-[9px] border-t border-[#244d8c] bg-[#2b579a] pr-[7px] text-[#7f95b8]">
        <span>CAPS</span><span>NUM</span><span>SCRL</span><span>INS</span>
      </div>
      <ErrorDialog />
    </div>
  );
}
